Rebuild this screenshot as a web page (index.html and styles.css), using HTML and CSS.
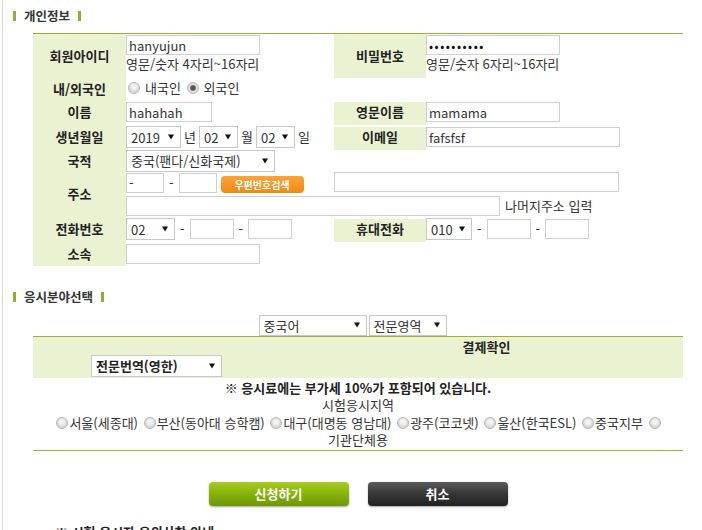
FILE: index.html
```html
<!DOCTYPE html>
<html lang="ko">
<head>
<meta charset="utf-8">
<title>응시신청</title>
<link rel="stylesheet" href="styles.css">
</head>
<body>
<div class="page">
  <h2 class="sec-title"><span class="bar"></span>개인정보<span class="bar"></span></h2>
  <table class="info">
    <colgroup><col class="c1"><col class="c2"><col class="c3"><col class="c4"></colgroup>
    <tr class="r1">
      <th class="lab">회원아이디</th>
      <td class="val top"><input class="inp w134" type="text" value="hanyujun"><div class="hint">영문/숫자 4자리~16자리</div></td>
      <th class="lab rl">비밀번호</th>
      <td class="val top rv"><input class="inp w134 pw" type="password" value="abcdefghij"><div class="hint">영문/숫자 6자리~16자리</div></td>
    </tr>
    <tr class="r2">
      <th class="lab">내/외국인</th>
      <td class="val" colspan="3"><label class="rad"><input class="radio" type="radio" name="nat"> 내국인</label> <label class="rad"><input class="radio" type="radio" name="nat" checked> 외국인</label></td>
    </tr>
    <tr class="r3">
      <th class="lab">이름</th>
      <td class="val"><input class="inp w86" type="text" value="hahahah"></td>
      <th class="lab rl gap">영문이름</th>
      <td class="val rv"><input class="inp w134" type="text" value="mamama"></td>
    </tr>
    <tr class="r4">
      <th class="lab">생년월일</th>
      <td class="val"><div class="line"><select class="sel w55"><option>2019</option></select><span class="unit">년</span><select class="sel w39"><option>02</option></select><span class="unit">월</span><select class="sel w39"><option>02</option></select><span class="unit">일</span></div></td>
      <th class="lab rl gap">이메일</th>
      <td class="val rv"><input class="inp w194" type="text" value="fafsfsf"></td>
    </tr>
    <tr class="r5">
      <th class="lab">국적</th>
      <td class="val" colspan="3"><select class="sel w149"><option>중국(팬다/신화국제)</option></select></td>
    </tr>
    <tr class="r6">
      <th class="lab">주소</th>
      <td class="val" colspan="3">
        <div class="addr1">
          <div class="zip"><input class="inp w38" type="text" value="-"><span class="dash">-</span><input class="inp w38" type="text"><button class="zipbtn" type="button">우편번호검색</button></div>
          <input class="inp w285" type="text">
        </div>
        <div class="addr2"><input class="inp w374" type="text"><span class="rest">나머지주소 입력</span></div>
      </td>
    </tr>
    <tr class="r7">
      <th class="lab">전화번호</th>
      <td class="val"><div class="line"><select class="sel w49"><option>02</option></select><span class="dash2">-</span><input class="inp w44" type="text"><span class="dash2">-</span><input class="inp w44" type="text"></div></td>
      <th class="lab rl gap">휴대전화</th>
      <td class="val rv"><div class="line"><select class="sel w46"><option>010</option></select><span class="dash2">-</span><input class="inp w44" type="text"><span class="dash2">-</span><input class="inp w44" type="text"></div></td>
    </tr>
    <tr class="r8">
      <th class="lab">소속</th>
      <td class="val" colspan="3"><input class="inp w134" type="text"></td>
    </tr>
  </table>

  <h2 class="sec-title sec2"><span class="bar"></span>응시분야선택<span class="bar"></span></h2>
  <div class="field-select">
    <select class="sel w108"><option>중국어</option></select>
    <select class="sel w78"><option>전문영역</option></select>
  </div>
  <div class="apply">
    <div class="apply-head">
      <div class="ah-left"><select class="sel w131 bold"><option>전문번역(영한)</option></select></div>
      <div class="ah-right">결제확인</div>
    </div>
    <div class="apply-body">
      <div class="note">※ 응시료에는 부가세 10%가 포함되어 있습니다.</div>
      <div>시험응시지역</div>
      <div class="regions"><input class="radio" type="radio" name="reg">서울(세종대) <input class="radio" type="radio" name="reg">부산(동아대 승학캠) <input class="radio" type="radio" name="reg">대구(대명동 영남대) <input class="radio" type="radio" name="reg">광주(코코넷) <input class="radio" type="radio" name="reg">울산(한국ESL) <input class="radio" type="radio" name="reg">중국지부 <input class="radio" type="radio" name="reg"></div>
      <div>기관단체용</div>
    </div>
  </div>
  <div class="buttons">
    <button class="btn btn-ok" type="button">신청하기</button>
    <button class="btn btn-cancel" type="button">취소</button>
  </div>
  <p class="cut">※ 시험 응시자 유의사항 안내</p>
</div>
</body>
</html>
```
FILE: styles.css
```css
* { box-sizing: border-box; }
html, body { margin: 0; padding: 0; background: #fff; }
body {
  font-family: "Noto Sans CJK KR", "Noto Sans", sans-serif;
  font-size: 13px;
  color: #333;
  overflow: hidden;
}
.page {
  margin-left: 2px;
  border-left: 1px solid #dcdcdc;
  min-height: 530px;
  padding-top: 8px;
}
.sec-title {
  margin: 0 0 0 10px;
  display: flex;
  align-items: center;
  gap: 8px;
  font-size: 12.5px;
  font-weight: bold;
  line-height: 16px;
  color: #333;
}
.bar { display: block; width: 3px; height: 10px; background: #8db232; }

/* personal info table */
.info {
  margin: 9px 0 0 30px;
  width: 650px;
  table-layout: fixed;
  border-collapse: collapse;
  border-top: 1px solid #a2ad3b;
}
.c1 { width: 93px; }
.c2 { width: 208px; }
.c3 { width: 92px; }
.c4 { width: 257px; }
.info th, .info td { padding: 0; }
.lab {
  background: #ebf2d2;
  font-weight: bold;
  color: #222;
  text-align: center;
  vertical-align: middle;
  font-size: 13px;
  line-height: 16px;
}
.rl.gap { background: linear-gradient(#fff 0 2px, #ebf2d2 2px); }
.val { text-align: left; vertical-align: middle; line-height: 18px; }
.val.top { vertical-align: top; padding-top: 1px; }
.rv { padding-left: 1px; }
.r1 { height: 44px; }
.r2 { height: 22px; }
.r3 { height: 25px; }
.r4 { height: 25px; }
.r5 { height: 22px; }
.r6 { height: 45px; }
.r7 { height: 25px; }
.r8 { height: 24px; }
.hint { line-height: 18px; color: #333; }

.inp {
  display: inline-block;
  height: 20px;
  border: 1px solid #cfcfcf;
  padding: 0 2px;
  font-family: inherit;
  font-size: 13px;
  color: #333;
  background: #fff;
  vertical-align: middle;
  outline: none;
}
.pw { font-size: 12px; letter-spacing: 1.5px; color: #111; }
.w38 { width: 38px; }
.w44 { width: 44px; }
.w86 { width: 86px; }
.w134 { width: 134px; }
.w194 { width: 194px; }
.w285 { width: 285px; }
.w374 { width: 374px; }

.sel {
  appearance: none;
  -webkit-appearance: none;
  height: 22px;
  border: 1px solid #c8c8c8;
  border-radius: 0;
  padding: 0 0 0 4px;
  font-family: inherit;
  font-size: 13px;
  color: #333;
  background: #fff url("data:image/svg+xml;utf8,<svg xmlns='http://www.w3.org/2000/svg' width='6' height='6'><path d='M0 0.5h6L3 5.5z' fill='%23111'/></svg>") no-repeat right 6px center;
  vertical-align: middle;
  outline: none;
}
.sel.bold { font-weight: bold; color: #222; }
.w39 { width: 39px; }
.w46 { width: 46px; }
.w49 { width: 49px; }
.w55 { width: 55px; }
.w78 { width: 78px; }
.w108 { width: 108px; }
.w131 { width: 131px; }
.w149 { width: 149px; }

.line { display: flex; align-items: center; }
.unit { padding: 0 3px; }
.dash { padding: 0 5px 0 5px; }
.dash2 { padding: 0 5px 0 5px; }

.rad { display: inline-flex; align-items: center; gap: 5px; margin-left: 2px; }
.rad + .rad { margin-left: 2px; }
.radio {
  appearance: none;
  -webkit-appearance: none;
  width: 12px;
  height: 12px;
  margin: 0;
  border-radius: 50%;
  border: 1px solid #b9b9b9;
  background: radial-gradient(circle at 50% 40%, #f4f4f4 0 2px, #d6d6d6 5px);
  vertical-align: middle;
}
.radio:checked {
  background: radial-gradient(circle, #555 0 2px, #9a9a9a 3px, #e8e8e8 3.5px, #d6d6d6 5px);
}

.addr1 { display: flex; align-items: flex-start; }
.zip { width: 208px; display: flex; align-items: center; }
.zipbtn {
  margin-left: 4px;
  margin-top: 4px;
  width: 83px;
  height: 17px;
  border: none;
  border-radius: 4px;
  background: linear-gradient(#fca33a, #f08a12);
  color: #fff;
  font-family: inherit;
  font-size: 10px;
  font-weight: bold;
  line-height: 17px;
  padding: 0;
}
.addr2 { display: flex; align-items: center; margin-top: 3px; }
.rest { padding-left: 5px; }

/* application section */
.sec2 { margin-top: 23px; }
.field-select {
  margin-top: 10px;
  display: flex;
  justify-content: center;
  gap: 2px;
}
.field-select .sel { height: 21px; }
.apply { margin-left: 30px; width: 650px; }
.apply-head {
  display: flex;
  height: 42px;
  background: #ebf2d2;
  border-top: 1px solid #a2ad3b;
}
.ah-left { width: 257px; align-self: flex-end; padding: 0 0 1px 58px; }
.ah-right {
  flex: 1;
  text-align: center;
  font-weight: bold;
  color: #222;
  line-height: 18px;
  padding-top: 1px;
}
.apply-body {
  height: 73px;
  text-align: center;
  line-height: 17.5px;
  padding-top: 1px;
  border-bottom: 1px solid #a2ad3b;
  color: #333;
}
.note { font-weight: bold; color: #222; }
.regions { white-space: nowrap; }
.regions .radio { margin: 0 1px 0 2px; position: relative; top: -1px; }

.buttons {
  margin: 31px 0 0 30px;
  width: 650px;
  display: flex;
  justify-content: center;
  gap: 19px;
}
.btn {
  width: 140px;
  height: 24px;
  border: none;
  border-radius: 4px;
  color: #fff;
  font-family: inherit;
  font-size: 13px;
  font-weight: bold;
  padding: 0;
  box-shadow: 0 1px 2px rgba(0,0,0,0.35);
}
.btn-ok { background: linear-gradient(#a8cc22, #86b10c 50%, #6e9803); }
.btn-cancel { background: linear-gradient(#5a5a5a, #363636 50%, #222); }
.cut {
  margin: 17px 0 0 52px;
  font-weight: bold;
  color: #222;
  line-height: 18px;
}
```
